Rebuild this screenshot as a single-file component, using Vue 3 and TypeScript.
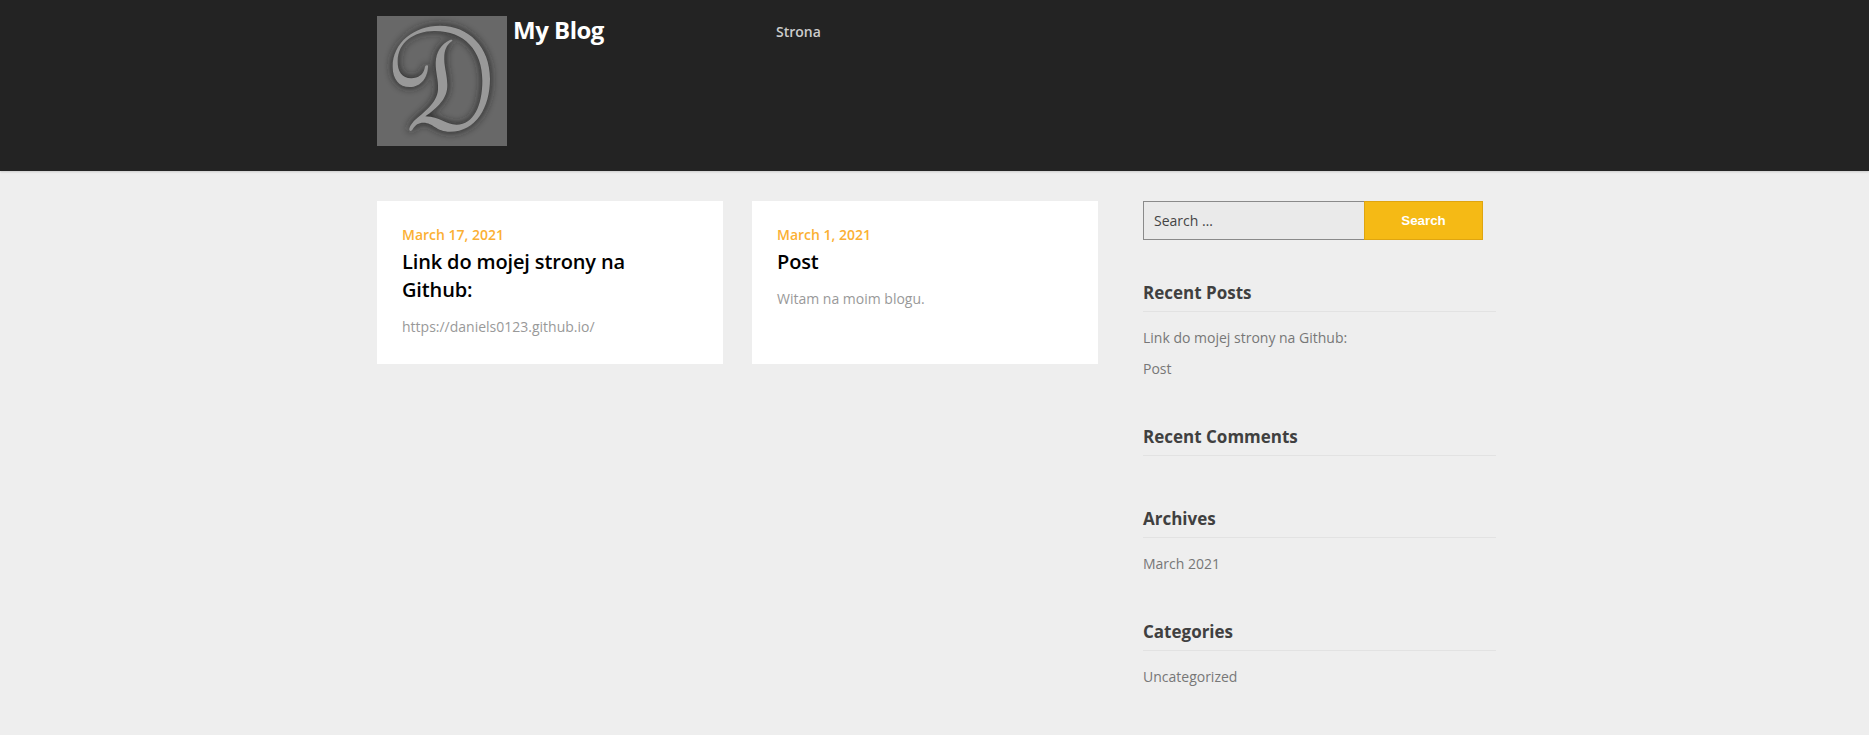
<script setup lang="ts">
interface Post {
  date: string
  title: string
  excerpt: string
}

interface Widget {
  title: string
  links: string[]
}

const posts: Post[] = [
  { date: 'March 17, 2021', title: 'Link do mojej strony na Github:', excerpt: 'https://daniels0123.github.io/' },
  { date: 'March 1, 2021', title: 'Post', excerpt: 'Witam na moim blogu.' },
]

const widgets: Widget[] = [
  { title: 'Recent Posts', links: ['Link do mojej strony na Github:', 'Post'] },
  { title: 'Recent Comments', links: [] },
  { title: 'Archives', links: ['March 2021'] },
  { title: 'Categories', links: ['Uncategorized'] },
]

const emblem =
  'M174 173C168 170 165 174 164 181C160 200 145 211 124 211C96 211 82 189 83 159C84 102 132 70 192 69C283 68 337 128 337 218C337 292 311 350 260 350C225 350 211 326 166 325C202 299 233 272 232 230C231 194 221 176 223 142C225 118 234 108 247 98C248 95 244 94 240 96C213 108 198 133 197 164C196 191 206 217 204 245C201 286 158 315 134 337C124 347 117 360 118 366C120 371 125 370 128 364C136 350 146 344 160 344C190 344 198 371 240 371C318 371 360 298 360 212C360 117 296 53 210 53C132 53 68 104 68 176C68 213 87 237 119 237C154 237 174 207 174 173Z'
</script>

<template>
  <div class="page">
    <header class="header">
      <div class="header-inner">
        <div class="brand">
          <svg class="logo" viewBox="21 24 390 390" aria-hidden="true">
            <defs>
              <filter id="logo-glow" x="-20%" y="-20%" width="140%" height="140%">
                <feGaussianBlur stdDeviation="13" />
              </filter>
            </defs>
            <rect x="21" y="24" width="390" height="390" fill="#686868" />
            <path class="emblem-shadow" filter="url(#logo-glow)" :d="emblem" />
            <path class="emblem" :d="emblem" />
          </svg>
          <h1 class="site-title">My Blog</h1>
        </div>
        <nav class="nav"><a>Strona</a></nav>
      </div>
    </header>

    <div class="content">
      <main class="posts">
        <article v-for="post in posts" :key="post.title" class="card">
          <div class="date">{{ post.date }}</div>
          <h2 class="title">{{ post.title }}</h2>
          <p class="excerpt">{{ post.excerpt }}</p>
        </article>
      </main>

      <aside class="sidebar">
        <form class="search" @submit.prevent>
          <input class="search-field" type="search" placeholder="Search …" />
          <button class="search-button" type="submit">Search</button>
        </form>
        <section v-for="widget in widgets" :key="widget.title" class="widget">
          <h3 class="widget-title">{{ widget.title }}</h3>
          <ul class="links">
            <li v-for="link in widget.links" :key="link"><a>{{ link }}</a></li>
          </ul>
        </section>
      </aside>
    </div>
  </div>
</template>

<style>
body {
  margin: 0;
  background: #eee;
}
</style>

<style scoped>
.page {
  min-height: 735px;
  background: #eee;
  font-family: 'Open Sans', sans-serif;
  font-size: 14px;
}
.header {
  height: 171px;
  background: #232323;
  box-shadow: 0 1px 2px rgba(0, 0, 0, 0.15);
}
.header-inner {
  display: flex;
  box-sizing: border-box;
  width: 1120px;
  margin-left: 377px;
  padding-top: 16px;
}
.brand {
  display: flex;
  align-items: flex-start;
  gap: 6px;
  width: 399px;
}
.logo {
  width: 130px;
  height: 130px;
}
.emblem {
  fill: #999;
}
.emblem-shadow {
  fill: #222;
  stroke: #222;
  stroke-width: 3;
}
.site-title {
  margin: 0;
  color: #fff;
  font-size: 24px;
  line-height: 28px;
  font-weight: 700;
  letter-spacing: -0.5px;
}
.nav {
  color: #ccc;
  font-weight: 600;
  line-height: 32px;
}
.content {
  display: flex;
  align-items: flex-start;
  gap: 45px;
  margin: 30px 0 0 377px;
}
.posts {
  display: grid;
  grid-template-columns: 346px 346px;
  gap: 29px;
}
.card {
  box-sizing: border-box;
  padding: 24px 25px 25px;
  background: #fff;
}
.date {
  color: #fbb034;
  font-weight: 600;
  line-height: 20px;
}
.title {
  margin: 3px 0 11px;
  color: #000;
  font-size: 20px;
  font-weight: 600;
  line-height: 28px;
  letter-spacing: -0.14px;
}
.excerpt {
  margin: 0;
  color: #999;
  line-height: 24px;
}
.sidebar {
  width: 353px;
}
.search {
  display: flex;
  width: 340px;
  height: 39px;
}
.search-field {
  box-sizing: border-box;
  width: 221px;
  margin: 0;
  padding: 0 10px;
  border: 1px solid #8a8a8a;
  border-right: 0;
  border-radius: 0;
  background: #eaeaea;
  font: 14px 'Open Sans', sans-serif;
  appearance: none;
}
.search-field::placeholder {
  color: #444;
  opacity: 1;
}
.search-button {
  width: 119px;
  padding: 0;
  border: 1px solid #dfa510;
  border-radius: 0;
  background: #f5ba15;
  color: #fff;
  font: 700 13.333px 'Liberation Sans', Arial, sans-serif;
}
.widget {
  padding-top: 40px;
}
.widget-title {
  margin: 0 0 10px;
  padding: 1px 0 6px;
  border-bottom: 1px solid #e2e2e2;
  color: #404040;
  font-size: 17px;
  font-weight: 700;
  line-height: 24px;
}
.links {
  margin: 0;
  padding: 0;
  list-style: none;
  color: #777;
  line-height: 31px;
}
</style>
